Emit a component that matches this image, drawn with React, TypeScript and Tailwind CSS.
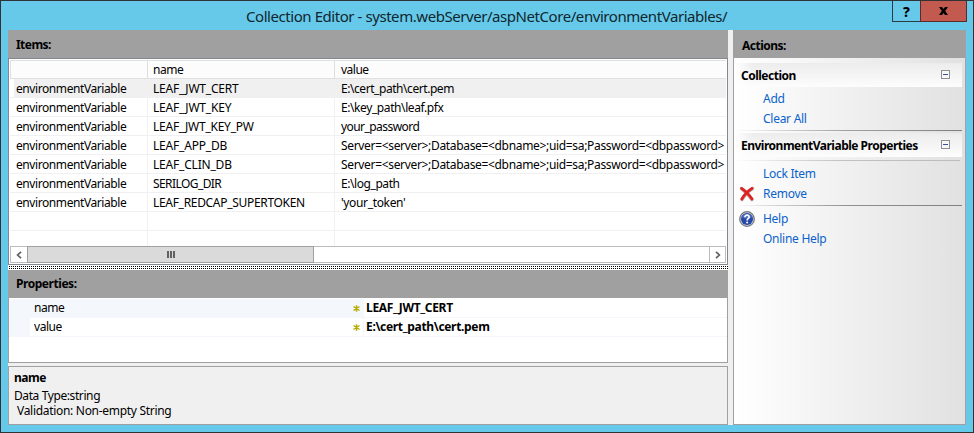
import React from "react";

type Row = { name: string; nameCls: string; value: string; valueCls: string; selected?: boolean };

const rows: Row[] = [
  { name: "LEAF_JWT_CERT", nameCls: "tracking-[-0.2px]", value: "E:\\cert_path\\cert.pem", valueCls: "tracking-[-0.44px]", selected: true },
  { name: "LEAF_JWT_KEY", nameCls: "tracking-[-0.2px]", value: "E:\\key_path\\leaf.pfx", valueCls: "tracking-[-0.41px]" },
  { name: "LEAF_JWT_KEY_PW", nameCls: "tracking-[-0.25px]", value: "your_password", valueCls: "tracking-[-0.56px]" },
  { name: "LEAF_APP_DB", nameCls: "tracking-[-0.2px]", value: "Server=<server>;Database=<dbname>;uid=sa;Password=<dbpassword>", valueCls: "tracking-[-0.33px]" },
  { name: "LEAF_CLIN_DB", nameCls: "tracking-[-0.2px]", value: "Server=<server>;Database=<dbname>;uid=sa;Password=<dbpassword>", valueCls: "tracking-[-0.33px]" },
  { name: "SERILOG_DIR", nameCls: "tracking-[-0.58px]", value: "E:\\log_path", valueCls: "tracking-[-0.43px]" },
  { name: "LEAF_REDCAP_SUPERTOKEN", nameCls: "tracking-[-0.31px]", value: "'your_token'", valueCls: "tracking-[-0.35px]" },
];

function TitleBar() {
  return (
    <div className="flex h-[29px] items-start pr-[6px]">
      <div className="h-[29px] flex-1 pl-[245px] text-[15px] leading-[31px] tracking-[-0.44px] whitespace-nowrap text-[#10262e]">
        Collection Editor - system.webServer/aspNetCore/environmentVariables/
      </div>
      <div className="flex h-[21px]">
        <div className="flex w-[28px] items-center justify-center border-b border-l border-[#2d3a40] pt-px text-[14px] font-extrabold text-black">?</div>
        <div className="flex w-[47px] items-center justify-center border-x border-b border-[#5a2b2a] bg-[#c35a50]">
          <svg width="9" height="8" viewBox="0 0 9 8" fill="#000">
            <path d="M0 0h3l1.500 2L6 0h3L6.200 4 9 8H6L4.500 6 3 8H0l2.800-4z" />
          </svg>
        </div>
      </div>
    </div>
  );
}

function ItemsTable() {
  return (
    <div className="h-[207px] border border-[#828790] bg-white px-px pt-px pb-px">
      <div className="flex h-[186px] flex-col overflow-hidden">
        <div className="flex h-[19px] shrink-0 border-y border-l border-[#e0e0e0] bg-[#fcfcfc] leading-[18px]">
          <div className="w-[137px] shrink-0 border-r border-[#dedede]" />
          <div className="w-[187px] shrink-0 border-r border-[#dedede] pl-[5px] tracking-[-0.45px]">name</div>
          <div className="flex-1 pl-[6px] tracking-[-0.5px]">value</div>
        </div>
        {rows.map((r) => (
          <div key={r.name} className="flex h-[19px] shrink-0 border-b border-[#f0f0f0] leading-[20px] whitespace-nowrap">
            {r.selected ? (
              <>
                <div className="ml-[4px] w-[134px] shrink-0 bg-[#f0f0f0] pl-[2px] tracking-[-0.42px]">environmentVariable</div>
                <div className={`w-[187px] shrink-0 bg-[#f0f0f0] pl-[5px] ${r.nameCls}`}>{r.name}</div>
                <div className={`flex-1 bg-[#f0f0f0] pl-[6px] ${r.valueCls}`}>{r.value}</div>
              </>
            ) : (
              <>
                <div className="w-[138px] shrink-0 border-r border-[#f0f0f0] pl-[6px] tracking-[-0.42px]">environmentVariable</div>
                <div className={`w-[187px] shrink-0 border-r border-[#f0f0f0] pl-[5px] ${r.nameCls}`}>{r.name}</div>
                <div className={`flex-1 pl-[6px] ${r.valueCls}`}>{r.value}</div>
              </>
            )}
          </div>
        ))}
        {[0, 1, 2].map((i) => (
          <div key={i} className="flex h-[19px] shrink-0 border-b border-[#f0f0f0]">
            <div className="w-[138px] border-r border-[#f0f0f0]" />
            <div className="w-[187px] border-r border-[#f0f0f0]" />
          </div>
        ))}
      </div>
      <div className="flex h-[17px] border border-[#bcbcbc] bg-white">
        <div className="flex w-[16px] items-center justify-center">
          <svg width="6" height="8" viewBox="0 0 6 8" fill="none" stroke="#606060" strokeWidth="1.700">
            <path d="M5 .8 1.600 4 5 7.200" />
          </svg>
        </div>
        <div className="-my-px flex w-[287px] items-center justify-center gap-px border border-[#a0a0a0] bg-[#dadada]">
          <div className="h-[7px] w-[2px] bg-[#606060]" />
          <div className="h-[7px] w-[2px] bg-[#606060]" />
          <div className="h-[7px] w-[2px] bg-[#606060]" />
        </div>
        <div className="flex-1" />
        <div className="flex w-[16px] items-center justify-center border-l border-[#bcbcbc]">
          <svg width="6" height="8" viewBox="0 0 6 8" fill="none" stroke="#606060" strokeWidth="1.700">
            <path d="M1 .8 4.400 4 1 7.200" />
          </svg>
        </div>
      </div>
    </div>
  );
}

function Star() {
  return (
    <svg width="7" height="7" viewBox="0 0 7 7" className="mt-[6px] shrink-0" stroke="#b4ac00" strokeWidth="1.500">
      <path d="M3.500 .3v6.400M.5 1.500l6 4M.5 5.500l6-4" />
    </svg>
  );
}

function PropertyRow({ name, value, active }: { name: string; value: string; active?: boolean }) {
  return (
    <div className="flex h-[19px] leading-[18px]">
      <div className="w-[21px] bg-[#f4f7fc]" />
      <div className={`flex w-[333px] border-b border-[#f4f7fc] pl-[4px] ${active ? "bg-[#f4f7fc]" : ""}`}>
        <div className="w-[319px] tracking-[-0.45px]">{name}</div>
        <Star />
      </div>
      <div className="flex-1 border-b border-l border-[#f4f7fc] pl-[2px] font-bold tracking-[-0.33px]">{value}</div>
    </div>
  );
}

function Toggle() {
  return (
    <div className="mr-[12px] mb-px flex h-[9px] w-[9px] items-center justify-center border border-[#8e8e98] bg-[#f7f7f7]">
      <div className="h-px w-[5px] bg-[#3c50a0]" />
    </div>
  );
}

function SectionHead({ children }: { children: React.ReactNode }) {
  return (
    <div className="mr-[3px] ml-[1px] flex h-[24px] items-center justify-between bg-[linear-gradient(to_right,#fff,transparent_8%),linear-gradient(#ececec,#fdfdfd)] pl-[6px] font-bold">
      <div className="pt-[2px] tracking-[-0.5px]">{children}</div>
      <Toggle />
    </div>
  );
}

function Link({ icon, children }: { icon?: React.ReactNode; children: React.ReactNode }) {
  return (
    <div className="flex h-[20px] items-center">
      <div className="flex w-[29px] pl-[5px]">{icon}</div>
      <div className="tracking-[-0.27px] text-[#0a62cc]">{children}</div>
    </div>
  );
}

function RemoveIcon() {
  return (
    <svg width="16" height="16" viewBox="0 0 16 16" fill="none" strokeLinecap="round" className="-mt-px">
      <path d="M2.500 2.500C6 5 10 9 13 13.500M13.500 2.500C9.500 5 5.500 9 3 13.500" stroke="#b9a4a4" strokeWidth="3.400" />
      <path d="M2.500 2.300C6 4.500 10 8.500 13 13M13 2.300C9 5 5 9 2.800 13" stroke="#e02222" strokeWidth="2.700" />
    </svg>
  );
}

function HelpIcon() {
  return (
    <svg width="16" height="16" viewBox="0 0 16 16" className="-mt-px">
      <circle cx="8" cy="8" r="7.300" fill="#cfcfcf" stroke="#74777e" strokeWidth="1.200" />
      <circle cx="8" cy="8" r="6" fill="#2447a8" />
      <path d="M3 6.500a5.200 5.200 0 0 1 10 0C10 8 6 8 3 6.500z" fill="#6f8fd8" opacity=".55" />
      <path d="M5.900 6.300C5.900 3.400 10.300 3.600 10.100 6.200 10 7.700 8.100 7.700 8.100 9.400" fill="none" stroke="#fff" strokeWidth="1.700" />
      <circle cx="8.100" cy="11.500" r="1" fill="#fff" />
    </svg>
  );
}

function Actions() {
  return (
    <div className="flex w-[233px] flex-col">
      <div className="h-[28px] bg-[#a0a0a0] pl-[9px] leading-[31px] font-bold tracking-[-0.5px]">Actions:</div>
      <div className="flex-1 border-x border-b border-[#a0a0a0] bg-linear-to-r from-white to-[#e1e1e1] pt-[5px]">
        <SectionHead>Collection</SectionHead>
        <div className="pt-[2px]">
          <Link>Add</Link>
          <Link>Clear All</Link>
        </div>
        <div className="mt-px mr-[3px] h-px bg-linear-to-r from-transparent via-[#a0a0a0] to-[#808080]" />
        <div className="h-[2px]" />
        <SectionHead>EnvironmentVariable Properties</SectionHead>
        <div className="mt-[3px] mr-[5px] h-px bg-linear-to-r from-transparent via-[#c0c0c0] to-[#bcbcbc]" />
        <div className="pt-[3px]">
          <Link>Lock Item</Link>
          <Link icon={<RemoveIcon />}>Remove</Link>
        </div>
        <div className="mt-px mr-[3px] h-px bg-linear-to-r from-transparent via-[#909090] to-[#808080]" />
        <div className="pt-[3px]">
          <Link icon={<HelpIcon />}>Help</Link>
          <Link>Online Help</Link>
        </div>
      </div>
    </div>
  );
}

export default function App() {
  return (
    <div className="flex h-[433px] w-[974px] flex-col border border-[#2f3336] bg-[#66c9e9] font-['Noto_Sans','Open_Sans',sans-serif] text-[12px] text-black">
      <TitleBar />
      <div className="mx-[7px] h-[395px] w-[958px] bg-[#f0f0f0]">
        <div className="flex h-full gap-[5px]">
          <div className="flex w-[720px] flex-col">
            <div className="h-[28px] bg-[#a0a0a0] pl-[8px] leading-[29px] font-bold tracking-[-0.55px]">Items:</div>
            <ItemsTable />
            <div className="h-[5px] bg-black bg-[linear-gradient(to_right,#fff_1px,transparent_1px),linear-gradient(#fff_1px,transparent_1px)] bg-[size:2px_2px]" />
            <div className="h-[28px] bg-[#a0a0a0] pl-[8px] leading-[28px] font-bold tracking-[-0.45px]">Properties:</div>
            <div className="h-[65px] border-x border-b border-[#a0a0a0] bg-white pt-px">
              <PropertyRow name="name" value="LEAF_JWT_CERT" active />
              <PropertyRow name="value" value={"E:\\cert_path\\cert.pem"} />
            </div>
            <div className="h-[3px]" />
            <div className="flex-1 border border-[#a0a0a0] pt-[3px] pl-[5px]">
              <div className="leading-[15px] font-bold tracking-[-0.5px]">name</div>
              <div className="mt-[3px] leading-[15px] tracking-[-0.4px]">Data Type:string</div>
              <div className="pl-[3px] leading-[15px] tracking-[-0.3px]">Validation: Non-empty String</div>
            </div>
          </div>
          <Actions />
        </div>
      </div>
    </div>
  );
}
